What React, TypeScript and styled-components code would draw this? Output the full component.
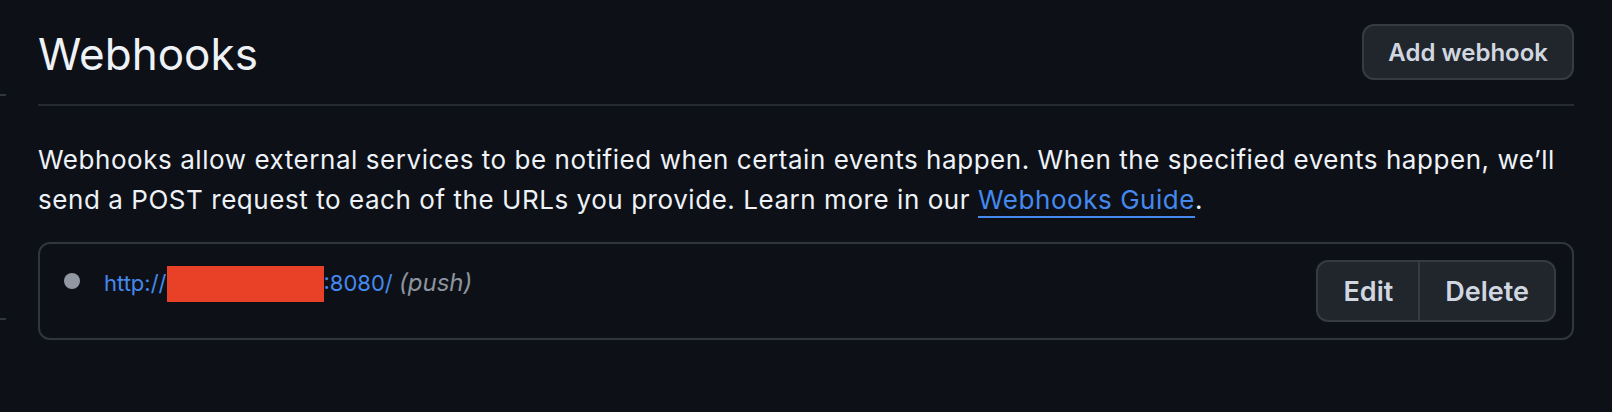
import styled, { createGlobalStyle } from "styled-components";

const GlobalStyle = createGlobalStyle`
  html,
  body {
    margin: 0;
    padding: 0;
    background: #0d1117;
  }
  body {
    font-family: Inter, "Liberation Sans", sans-serif;
    color: #e6edf3;
  }
`;

const Page = styled.div`
  display: flex;
  width: 1612px;
  height: 412px;
  background: #0d1117;
  overflow: hidden;
`;

const Sidebar = styled.div`
  display: flex;
  flex-direction: column;
  width: 6px;
  margin-right: 32px;
`;

const SideDivider = styled.div<{ $top: number }>`
  height: 2px;
  margin-top: ${(p) => p.$top}px;
  background: #30363d;
`;

const Main = styled.main`
  flex: 1;
  margin-right: 38px;
`;

const Header = styled.div`
  display: flex;
  align-items: flex-start;
  justify-content: space-between;
  padding: 24px 0 22px;
  border-bottom: 2px solid #262b33;
`;

const Title = styled.h2`
  margin: 2px 0 0 0;
  font-size: 44px;
  line-height: 56px;
  font-weight: 400;
  color: #eef2f7;
`;

const Button = styled.button<{ $size?: "md" | "lg" }>`
  height: ${(p) => (p.$size === "lg" ? 62 : 56)}px;
  padding: 0 ${(p) => (p.$size === "lg" ? 25 : 24)}px;
  font-family: Inter, "Liberation Sans", sans-serif;
  font-size: ${(p) => (p.$size === "lg" ? 27 : 24)}px;
  font-weight: 600;
  color: #d1d7e0;
  background: #21262d;
  border: 2px solid #363b42;
  border-radius: 12px;
`;

const Intro = styled.p`
  margin: 34px 0 0;
  font-size: 26px;
  line-height: 40px;
  letter-spacing: 0.55px;
  color: #eef2f7;
`;

const Link = styled.a`
  color: #4589ef;
  text-decoration: underline;
  text-decoration-thickness: 2px;
  text-underline-offset: 7px;
`;

const HookBox = styled.div`
  margin-top: 22px;
  border: 2px solid #30363d;
  border-radius: 12px;
`;

const HookRow = styled.div`
  display: flex;
  align-items: flex-start;
  padding: 16px;
`;

const Dot = styled.span`
  flex: none;
  width: 16px;
  height: 16px;
  margin: 13px 24px 0 8px;
  border-radius: 50%;
  background: #9198a1;
`;

const HookInfo = styled.div`
  flex: 1;
  margin-top: 5px;
  font-size: 22px;
  line-height: 36px;
`;

const HookUrl = styled.a`
  color: #4589ef;
  text-decoration: none;
`;

const Redacted = styled.span`
  display: inline-block;
  width: 157px;
  height: 36px;
  vertical-align: -11px;
  background: #e94128;
`;

const Events = styled.em`
  font-size: 24px;
  color: #8d949e;
`;

const BtnGroup = styled.div`
  display: flex;

  & > button:first-child {
    border-radius: 12px 0 0 12px;
  }
  & > button:last-child {
    margin-left: -2px;
    border-radius: 0 12px 12px 0;
  }
`;

export default function App() {
  return (
    <>
      <GlobalStyle />
      <Page>
        <Sidebar>
          <SideDivider $top={94} />
          <SideDivider $top={222} />
        </Sidebar>
        <Main>
          <Header>
            <Title>Webhooks</Title>
            <Button>Add webhook</Button>
          </Header>
          <Intro>
            Webhooks allow external services to be notified when certain events
            happen. When the specified events happen, we’ll send a POST request
            to each of the URLs you provide. Learn more in our{" "}
            <Link href="#">Webhooks Guide</Link>.
          </Intro>
          <HookBox>
            <HookRow>
              <Dot />
              <HookInfo>
                <HookUrl href="#">
                  http://
                  <Redacted />
                  :8080/
                </HookUrl>{" "}
                <Events>(push)</Events>
              </HookInfo>
              <BtnGroup>
                <Button $size="lg">Edit</Button>
                <Button $size="lg">Delete</Button>
              </BtnGroup>
            </HookRow>
          </HookBox>
        </Main>
      </Page>
    </>
  );
}
